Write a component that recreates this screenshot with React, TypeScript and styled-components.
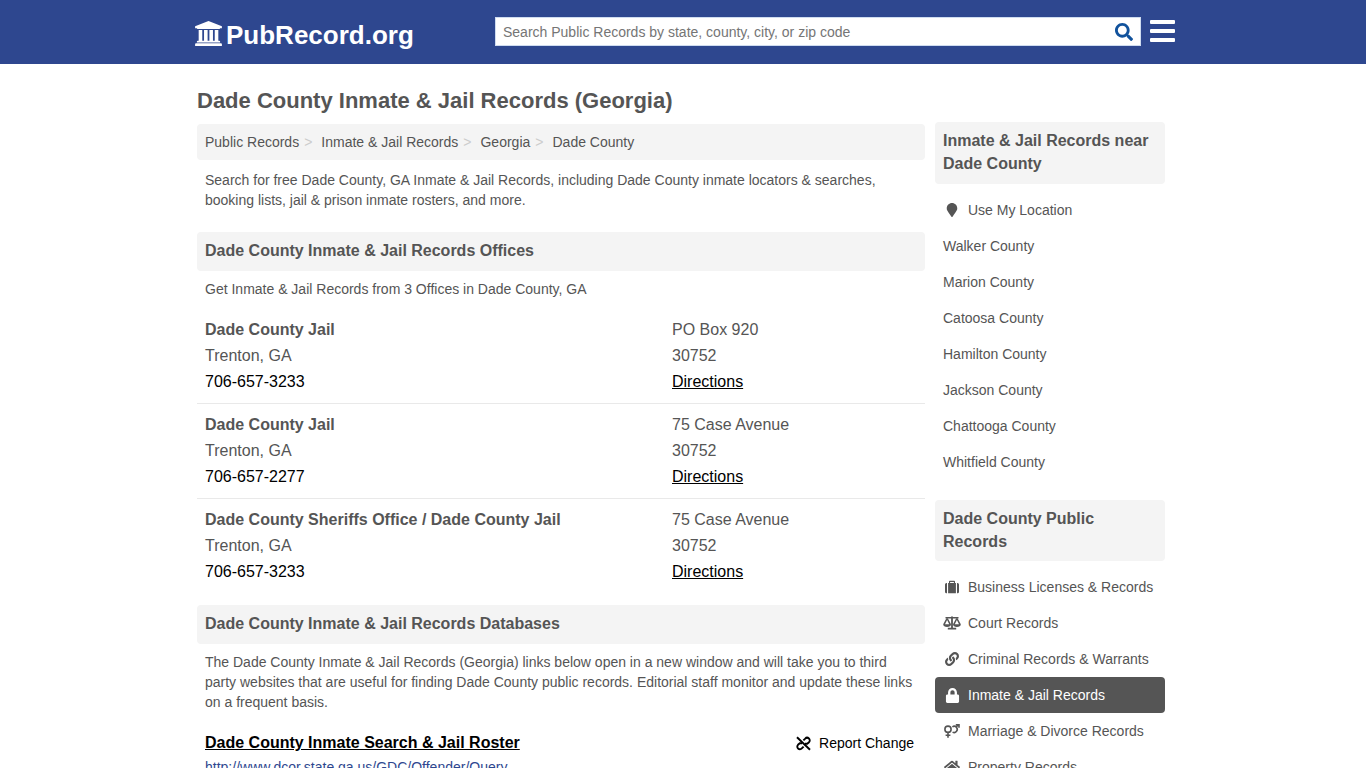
import React from "react";
import styled, { createGlobalStyle } from "styled-components";
import { FaHome, FaLink, FaLock, FaMapMarker, FaSearch } from "react-icons/fa";

const GlobalStyle = createGlobalStyle`
  * { box-sizing: border-box; }
  body {
    margin: 0;
    background: #fff;
    color: #555;
    font: 14px/20px "Liberation Sans", Arial, sans-serif;
  }
  a { color: inherit; text-decoration: none; }
  h1, h2, h3, p, ul, ol { margin: 0; padding: 0; }
  ul, ol { list-style: none; }
`;

const Header = styled.header`
  background: #2e478f;
`;

const HeaderInner = styled.div`
  display: flex;
  align-items: center;
  max-width: 984px;
  height: 64px;
  margin: 0 auto;
  padding: 0 0 2px 4px;
`;

const Logo = styled.a`
  display: flex;
  align-items: center;
  flex: 0 0 300px;
  gap: 4px;
  color: #fff;
  font-size: 26px;
  font-weight: bold;
  line-height: 30px;
  padding-top: 8px;

  svg { margin-bottom: 3px; }
`;

const SearchForm = styled.form`
  display: flex;
  flex: 1;
  height: 29px;
  background: #fff;
  border: 1px solid #cfdcf0;
`;

const SearchInput = styled.input`
  flex: 1;
  min-width: 0;
  padding: 2px 7px 0;
  border: 0;
  outline: 0;
  background: transparent;
  color: #555;
  font: inherit;

  &::placeholder { color: #757575; opacity: 1; }
`;

const IconButton = styled.button`
  display: flex;
  align-items: center;
  padding: 0;
  border: 0;
  background: transparent;
  color: #fff;
  cursor: pointer;
`;

const SearchButton = styled(IconButton)`
  padding: 2px 7px 0;
  color: #11529c;
`;

const MenuButton = styled(IconButton)`
  margin: 0 0 0 9px;
`;

const Page = styled.div`
  display: flex;
  align-items: flex-start;
  gap: 10px;
  max-width: 972px;
  margin: 0 auto;
  padding: 22px 4px 20px 0;
`;

const Main = styled.main`
  flex: 1;
  min-width: 0;
`;

const Sidebar = styled.aside`
  flex: 0 0 230px;
  padding-top: 36px;
`;

const Title = styled.h1`
  padding: 1px 0 9px;
  font-size: 22px;
  line-height: 28px;
`;

const Crumbs = styled.ol`
  display: flex;
  flex-wrap: wrap;
  padding: 8px;
  border-radius: 4px;
  background: #f4f4f4;
`;

const Crumb = styled.li`
  &:not(:last-child)::after {
    content: ">";
    margin: 0 9px 0 5px;
    color: #ccc;
  }
`;

const Text = styled.p`
  padding: 8px 8px 10px;
`;

const Intro = styled(Text)`
  padding: 10px 8px 22px;
`;

const Heading = styled.h2`
  padding: 7px 8px 9px;
  border-radius: 4px;
  background: #f4f4f4;
  font-size: 16px;
  line-height: 23px;
`;

const SideHeading = styled(Heading)`
  padding-bottom: 8px;
`;

const Offices = styled.ul`
  margin-bottom: 12px;
`;

const Office = styled.li`
  display: grid;
  grid-template-columns: 1fr 245px;
  padding: 8px;
  font-size: 16px;
  line-height: 26px;

  & + & { border-top: 1px solid #e9e9e9; }
`;

const Lines = styled.div`
  display: flex;
  flex-direction: column;
  align-items: flex-start;
`;

const Phone = styled.a`
  color: #000;
`;

const TextLink = styled.a`
  color: #000;
  text-decoration: underline;
`;

const Database = styled.li`
  padding: 8px;
`;

const DatabaseTop = styled.div`
  display: flex;
  justify-content: space-between;
  padding-right: 3px;
  font-size: 16px;
  line-height: 26px;
`;

const Report = styled.a`
  display: flex;
  align-items: center;
  gap: 8px;
  color: #000;
  font-size: 14px;
`;

const Url = styled.a`
  display: block;
  color: #2e478f;
  line-height: 22px;
`;

const SideList = styled.ul`
  padding: 8px 0 20px;
`;

const SideLink = styled.a<{ $active?: boolean }>`
  display: flex;
  align-items: center;
  gap: 7px;
  padding: 8px;
  border-radius: 4px;
  background: ${(p) => (p.$active ? "#555" : "transparent")};
  color: ${(p) => (p.$active ? "#fff" : "inherit")};
  white-space: nowrap;
`;

const IconSlot = styled.span`
  display: flex;
  flex: 0 0 18px;
  justify-content: center;
`;

const BankIcon = () => (
  <svg width="27" height="25" viewBox="0 0 1920 1792" fill="currentColor" aria-hidden="true">
    <path d="M960 0l960 384v128h-128q0 26-20.5 45t-48.5 19h-1526q-28 0-48.5-19t-20.5-45h-128v-128zM256 640h256v768h128v-768h256v768h128v-768h256v768h128v-768h256v768h59q28 0 48.5 19t20.5 45v64h-1664v-64q0-26 20.5-45t48.5-19h59v-768zM1851 1600q28 0 48.5 19t20.5 45v128h-1920v-128q0-26 20.5-45t48.5-19h1782z" />
  </svg>
);

const MenuIcon = () => (
  <svg width="25" height="22" viewBox="0 0 25 22" fill="currentColor" aria-hidden="true">
    <rect width="25" height="4" rx="1" />
    <rect y="9" width="25" height="4" rx="1" />
    <rect y="18" width="25" height="4" rx="1" />
  </svg>
);

const SuitcaseIcon = () => (
  <svg width="14" height="14" viewBox="0 0 14 14" fill="currentColor" aria-hidden="true">
    <path d="M2 3V13.2H1.5A1.5 1.5 0 0 1 0 11.7V4.5A1.5 1.5 0 0 1 1.5 3Z" />
    <path d="M12 3V13.2H12.5A1.5 1.5 0 0 0 14 11.7V4.5A1.5 1.5 0 0 0 12.5 3Z" />
    <path
      fillRule="evenodd"
      d="M3.1 3H4V1.6A.8.8 0 0 1 4.8.8H9.2A.8.8 0 0 1 10 1.6V3H10.9V13.2H3.1ZM5.1 3H8.9V1.9H5.1Z"
    />
  </svg>
);

const ScalesIcon = () => (
  <svg width="18" height="14" viewBox="0 0 18 14" fill="currentColor" aria-hidden="true">
    <path d="M8 1A1.1 1.1 0 0 1 10 1H15.5V2.4H9.9V11.8H13.2V13.6H4.8V11.8H8.1V2.4H2.5V1Z" />
    <path
      fillRule="evenodd"
      d="M3.4 2.2H4.8L8 8.2C8 10 6.4 11 4.1 11S.2 10 .2 8.2ZM4.1 4L2 8.2H6.2Z"
    />
    <path
      fillRule="evenodd"
      d="M13.2 2.2H14.6L17.8 8.2C17.8 10 16.2 11 13.9 11S10 10 10 8.2ZM13.9 4L11.8 8.2H16Z"
    />
  </svg>
);

const MarriageIcon = () => (
  <svg
    width="18"
    height="16"
    viewBox="0 0 18 16"
    fill="none"
    stroke="currentColor"
    strokeWidth="1.6"
    aria-hidden="true"
  >
    <circle cx="5" cy="6.2" r="3.1" />
    <path d="M5 9.3V14.8M2.6 12.3H7.4" />
    <path d="M9.4 3.8A3.1 3.1 0 1 1 9.6 9.1M13.2 4L15.4 1.8M12.8 1.8H16V4.8" />
  </svg>
);

const BrokenLinkIcon = () => (
  <svg
    width="15"
    height="15"
    viewBox="0 0 15 15"
    fill="none"
    stroke="currentColor"
    strokeWidth="1.9"
    aria-hidden="true"
  >
    <path d="M1 1.2L14 13.8" />
    <path d="M7.4 4.4L9.2 2.6A2.6 2.6 0 0 1 13 6.2L11.2 7.7H9" />
    <path d="M7.6 10.6L5.8 12.4A2.6 2.6 0 0 1 2 8.8L3.8 7.3H6" />
  </svg>
);

const offices = [
  { name: "Dade County Jail", phone: "706-657-3233", street: "PO Box 920" },
  { name: "Dade County Jail", phone: "706-657-2277", street: "75 Case Avenue" },
  {
    name: "Dade County Sheriffs Office / Dade County Jail",
    phone: "706-657-3233",
    street: "75 Case Avenue",
  },
];

const counties = ["Walker", "Marion", "Catoosa", "Hamilton", "Jackson", "Chattooga", "Whitfield"];

const categories: { label: string; icon: React.ReactNode; active?: boolean }[] = [
  { label: "Business Licenses & Records", icon: <SuitcaseIcon /> },
  { label: "Court Records", icon: <ScalesIcon /> },
  { label: "Criminal Records & Warrants", icon: <FaLink size={14} /> },
  { label: "Inmate & Jail Records", icon: <FaLock size={15} />, active: true },
  { label: "Marriage & Divorce Records", icon: <MarriageIcon /> },
  { label: "Property Records", icon: <FaHome size={16} /> },
];

export default function App() {
  return (
    <>
      <GlobalStyle />
      <Header>
        <HeaderInner>
          <Logo href="#">
            <BankIcon />
            PubRecord.org
          </Logo>
          <SearchForm>
            <SearchInput
              type="text"
              aria-label="Search Public Records"
              placeholder="Search Public Records by state, county, city, or zip code"
            />
            <SearchButton type="submit" aria-label="Search">
              <FaSearch size={18} />
            </SearchButton>
          </SearchForm>
          <MenuButton type="button" aria-label="Menu">
            <MenuIcon />
          </MenuButton>
        </HeaderInner>
      </Header>
      <Page>
        <Main>
          <Title>Dade County Inmate &amp; Jail Records (Georgia)</Title>
          <Crumbs>
            {["Public Records", "Inmate & Jail Records", "Georgia", "Dade County"].map((c) => (
              <Crumb key={c}>
                <a href="#">{c}</a>
              </Crumb>
            ))}
          </Crumbs>
          <Intro>
            Search for free Dade County, GA Inmate &amp; Jail Records, including Dade County inmate
            locators &amp; searches, booking lists, jail &amp; prison inmate rosters, and more.
          </Intro>
          <Heading>Dade County Inmate &amp; Jail Records Offices</Heading>
          <Text>Get Inmate &amp; Jail Records from 3 Offices in Dade County, GA</Text>
          <Offices>
            {offices.map((o, i) => (
              <Office key={i}>
                <Lines>
                  <strong>{o.name}</strong>
                  <span>Trenton, GA</span>
                  <Phone href={`tel:${o.phone}`}>{o.phone}</Phone>
                </Lines>
                <Lines>
                  <span>{o.street}</span>
                  <span>30752</span>
                  <TextLink href="#">Directions</TextLink>
                </Lines>
              </Office>
            ))}
          </Offices>
          <Heading>Dade County Inmate &amp; Jail Records Databases</Heading>
          <Text>
            The Dade County Inmate &amp; Jail Records (Georgia) links below open in a new window and
            will take you to third party websites that are useful for finding Dade County public
            records. Editorial staff monitor and update these links on a frequent basis.
          </Text>
          <ul>
            <Database>
              <DatabaseTop>
                <TextLink href="#">
                  <strong>Dade County Inmate Search &amp; Jail Roster</strong>
                </TextLink>
                <Report href="#">
                  <BrokenLinkIcon />
                  Report Change
                </Report>
              </DatabaseTop>
              <Url href="#">http://www.dcor.state.ga.us/GDC/Offender/Query</Url>
            </Database>
          </ul>
        </Main>
        <Sidebar>
          <Heading>Inmate &amp; Jail Records near Dade County</Heading>
          <SideList>
            <li>
              <SideLink href="#">
                <IconSlot>
                  <FaMapMarker size={14} />
                </IconSlot>
                Use My Location
              </SideLink>
            </li>
            {counties.map((c) => (
              <li key={c}>
                <SideLink href="#">{c} County</SideLink>
              </li>
            ))}
          </SideList>
          <SideHeading>Dade County Public Records</SideHeading>
          <SideList>
            {categories.map(({ label, icon, active }) => (
              <li key={label}>
                <SideLink href="#" $active={active}>
                  <IconSlot>{icon}</IconSlot>
                  {label}
                </SideLink>
              </li>
            ))}
          </SideList>
        </Sidebar>
      </Page>
    </>
  );
}
